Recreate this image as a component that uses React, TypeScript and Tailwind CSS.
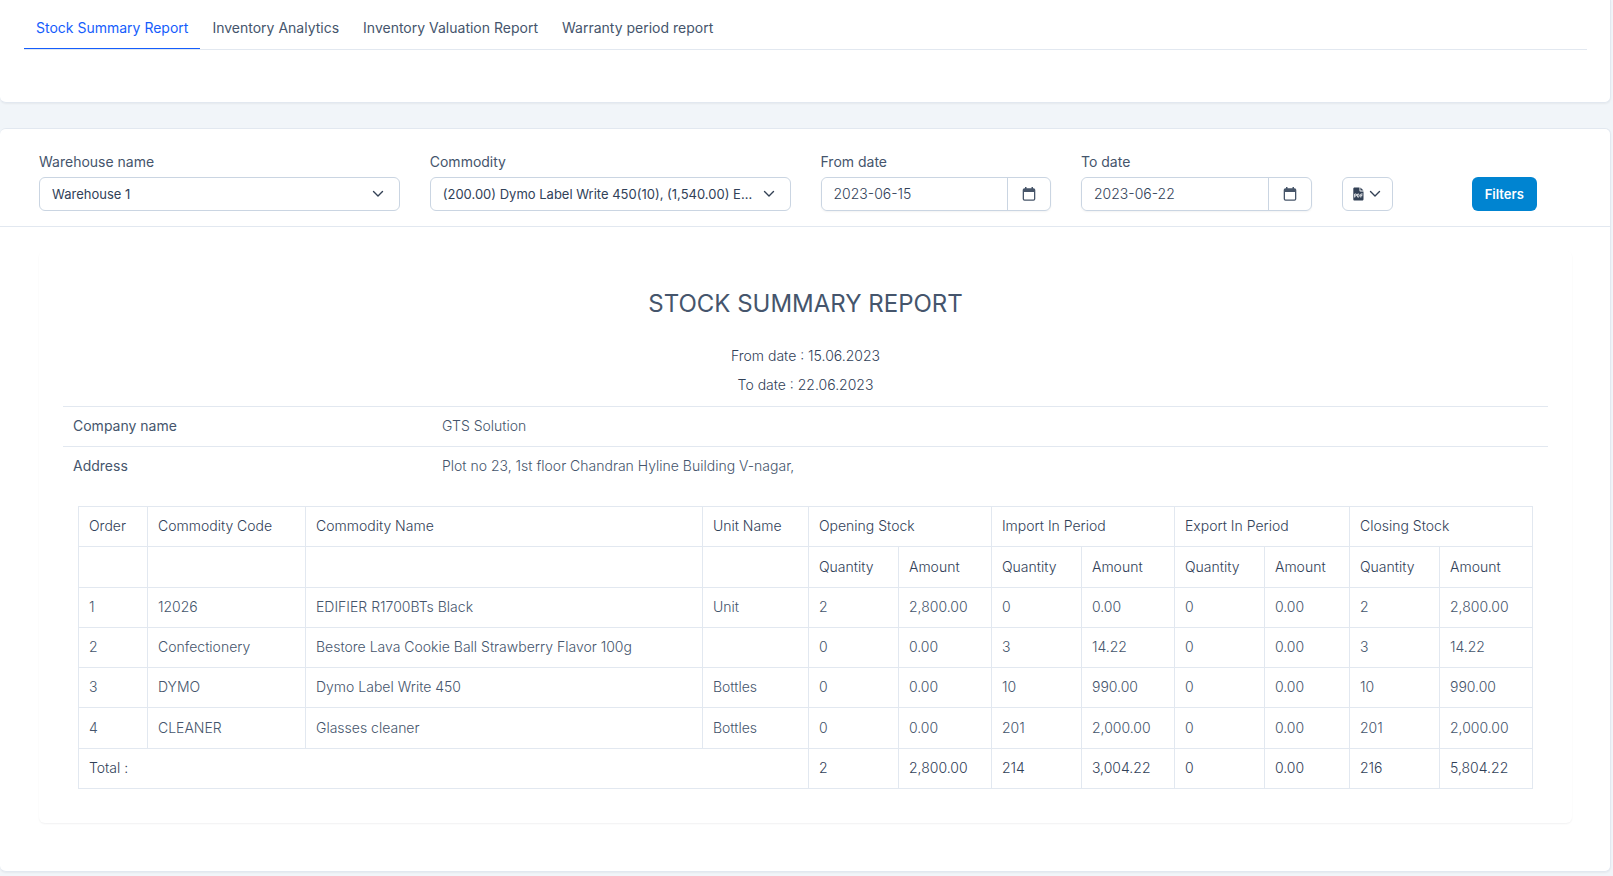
import { useState } from "react";

const tabs = [
  "Stock Summary Report",
  "Inventory Analytics",
  "Inventory Valuation Report",
  "Warranty period report",
];

const groups = ["Opening Stock", "Import In Period", "Export In Period", "Closing Stock"];

const rows = [
  ["1", "12026", "EDIFIER R1700BTs Black", "Unit", "2", "2,800.00", "0", "0.00", "0", "0.00", "2", "2,800.00"],
  ["2", "Confectionery", "Bestore Lava Cookie Ball Strawberry Flavor 100g", "", "0", "0.00", "3", "14.22", "0", "0.00", "3", "14.22"],
  ["3", "DYMO", "Dymo Label Write 450", "Bottles", "0", "0.00", "10", "990.00", "0", "0.00", "10", "990.00"],
  ["4", "CLEANER", "Glasses cleaner", "Bottles", "0", "0.00", "201", "2,000.00", "0", "0.00", "201", "2,000.00"],
];

const totals = ["2", "2,800.00", "214", "3,004.22", "0", "0.00", "216", "5,804.22"];

const cell = "border border-slate-200 px-[10px] pt-[9px] pb-[10px] text-left font-light";

function Chevron() {
  return (
    <svg viewBox="0 0 12 8" className="h-2 w-3 shrink-0" fill="none" aria-hidden="true">
      <path d="M1.500 1.500 6 6l4.500-4.500" stroke="#334155" strokeWidth="1.400" strokeLinecap="round" strokeLinejoin="round" />
    </svg>
  );
}

function CalendarIcon() {
  return (
    <svg viewBox="0 0 14 16" className="h-4 w-[14px]" aria-hidden="true">
      <path
        fill="#475569"
        fillRule="evenodd"
        d="M3 1h1.500v1.200h5V1H11v1.200h.5A1.800 1.800 0 0 1 13.300 4v9a1.800 1.800 0 0 1-1.800 1.800h-9A1.800 1.800 0 0 1 .7 13V4a1.800 1.800 0 0 1 1.800-1.800H3V1Zm-1 5v7c0 .3.200.5.500.5h9c.3 0 .5-.2.500-.5V6H2Z"
      />
    </svg>
  );
}

function PdfIcon() {
  return (
    <svg viewBox="0 0 11 14" className="h-[14px] w-[11px]" aria-hidden="true">
      <path fill="#334155" d="M1.500.5h5v3.300c0 .4.300.7.700.7h3.300v7.700c0 .7-.6 1.300-1.300 1.300H1.500C.8 13.500.3 12.900.3 12.200V1.800C.3 1.100.8.500 1.500.5Z" />
      <path fill="#334155" d="M7.400.5v3.100h3.100L7.400.5Z" />
      <path stroke="#fff" strokeWidth=".9" fill="none" d="M1.700 10.500V7h1a.9.9 0 0 1 0 1.900h-1M4.700 7v3.100h.4c.8 0 1.200-.6 1.200-1.500S5.900 7 5.100 7ZM7.800 10.500V7h1.900M7.800 8.700H9.400" />
    </svg>
  );
}

function SelectField({ id, label, value }: { id: string; label: string; value: string }) {
  return (
    <div className="col-span-3 min-w-0">
      <label htmlFor={id} className="mb-[5px] block font-normal text-slate-600">
        {label}
      </label>
      <div className="grid items-center">
        <select
          id={id}
          className="col-start-1 row-start-1 h-[34px] w-full appearance-none truncate rounded-md border border-slate-300 bg-white pr-8 pl-3 text-[13px] font-normal text-slate-700"
        >
          <option>{value}</option>
        </select>
        <span className="pointer-events-none col-start-1 row-start-1 mr-4 justify-self-end">
          <Chevron />
        </span>
      </div>
    </div>
  );
}

function DateField({ id, label, initial }: { id: string; label: string; initial: string }) {
  const [value, setValue] = useState(initial);
  return (
    <div className="col-span-2 min-w-0">
      <label htmlFor={id} className="mb-[5px] block font-normal text-slate-600">
        {label}
      </label>
      <div className="flex h-[34px] rounded-md border border-slate-300 shadow-xs">
        <input
          id={id}
          value={value}
          onChange={(e) => setValue(e.target.value)}
          className="min-w-0 flex-1 rounded-l-md bg-white px-3 text-slate-700"
        />
        <button type="button" aria-label={`Pick ${label}`} className="flex w-[43px] items-center justify-center border-l border-slate-300">
          <CalendarIcon />
        </button>
      </div>
    </div>
  );
}

export default function App() {
  return (
    <div className="min-h-screen bg-slate-100 pr-0.5 font-['Inter',sans-serif] text-sm font-light text-slate-700">
      <section className="rounded-b-md border-r border-b border-slate-200 bg-white pr-[23px] pb-[52px] pl-6 shadow-xs">
        <nav className="flex border-b border-slate-200">
          {tabs.map((tab, i) => (
            <a
              key={tab}
              href="#"
              className={
                i === 0
                  ? "border-b border-blue-600 px-3 pt-[18px] pb-[10px] font-normal text-blue-600"
                  : "px-3 pt-[18px] pb-[10px] font-normal text-slate-600"
              }
            >
              {tab}
            </a>
          ))}
        </nav>
      </section>

      <section className="mt-[25px] rounded-md border border-l-0 border-slate-200 bg-white shadow-xs">
        <form
          className="grid grid-cols-12 items-end gap-x-[30px] border-b border-slate-200 pt-[23px] pr-[38px] pb-[15px] pl-[39px]"
          onSubmit={(e) => e.preventDefault()}
        >
          <SelectField id="warehouse" label="Warehouse name" value="Warehouse 1" />
          <SelectField id="commodity" label="Commodity" value="(200.00) Dymo Label Write 450(10), (1,540.00) EDIFIER R1700BTs Black" />
          <DateField id="from" label="From date" initial="2023-06-15" />
          <DateField id="to" label="To date" initial="2023-06-22" />
          <button type="button" aria-label="Export as PDF" className="flex h-[34px] w-[51px] items-center justify-center gap-[5px] rounded-md border border-slate-300">
            <PdfIcon />
            <Chevron />
          </button>
          <button type="submit" className="h-[34px] w-[65px] rounded-md bg-sky-600 text-[13px] font-semibold text-white">
            Filters
          </button>
        </form>

        <div className="pt-6 pr-[38px] pb-12 pl-[39px]">
          <div className="rounded-md px-6 pt-[37px] pb-[34px] shadow-[0_1px_2px_rgba(15,23,42,0.06)]">
            <h1 className="text-center text-2xl font-normal text-slate-600">STOCK SUMMARY REPORT</h1>
            <p className="mt-[26px] text-center leading-5">From date : 15.06.2023</p>
            <p className="mt-[9px] text-center leading-5">To date : 22.06.2023</p>
            <table className="mt-[11px] w-full table-fixed text-slate-600">
              <colgroup>
                <col className="w-[369px]" />
                <col />
              </colgroup>
              <tbody>
                <tr className="border-t border-slate-200">
                  <th className="px-[10px] pt-[9px] pb-[10px] text-left font-normal">Company name</th>
                  <td className="px-[10px] pt-[9px] pb-[10px]">GTS Solution</td>
                </tr>
                <tr className="border-t border-slate-200">
                  <th className="px-[10px] pt-[9px] pb-[10px] text-left font-normal">Address</th>
                  <td className="px-[10px] pt-[9px] pb-[10px]">Plot no 23, 1st floor Chandran Hyline Building V-nagar,</td>
                </tr>
              </tbody>
            </table>
            <div className="mt-5 px-[15px]">
              <table className="w-full table-fixed border-collapse text-slate-600">
                <colgroup>
                  <col className="w-[69px]" />
                  <col className="w-[158px]" />
                  <col />
                  <col className="w-[106px]" />
                  <col className="w-[90px]" />
                  <col className="w-[93px]" />
                  <col className="w-[90px]" />
                  <col className="w-[93px]" />
                  <col className="w-[90px]" />
                  <col className="w-[85px]" />
                  <col className="w-[90px]" />
                  <col className="w-[93px]" />
                </colgroup>
                <thead className="text-slate-700">
                  <tr>
                    <th className={cell}>Order</th>
                    <th className={cell}>Commodity Code</th>
                    <th className={cell}>Commodity Name</th>
                    <th className={cell}>Unit Name</th>
                    {groups.map((g) => (
                      <th key={g} colSpan={2} className={cell}>
                        {g}
                      </th>
                    ))}
                  </tr>
                  <tr className="h-[41px]">
                    <td className={cell} />
                    <td className={cell} />
                    <td className={cell} />
                    <td className={cell} />
                    {groups.flatMap((g) => [
                      <th key={`${g}-q`} className={cell}>
                        Quantity
                      </th>,
                      <th key={`${g}-a`} className={cell}>
                        Amount
                      </th>,
                    ])}
                  </tr>
                </thead>
                <tbody>
                  {rows.map((row) => (
                    <tr key={row[0]} className="last:h-[41px]">
                      {row.map((value, i) => (
                        <td key={i} className={cell}>
                          {value}
                        </td>
                      ))}
                    </tr>
                  ))}
                </tbody>
                <tfoot className="text-slate-700">
                  <tr>
                    <th colSpan={4} className={cell}>
                      Total :
                    </th>
                    {totals.map((value, i) => (
                      <td key={i} className={cell}>
                        {value}
                      </td>
                    ))}
                  </tr>
                </tfoot>
              </table>
            </div>
          </div>
        </div>
      </section>
    </div>
  );
}
